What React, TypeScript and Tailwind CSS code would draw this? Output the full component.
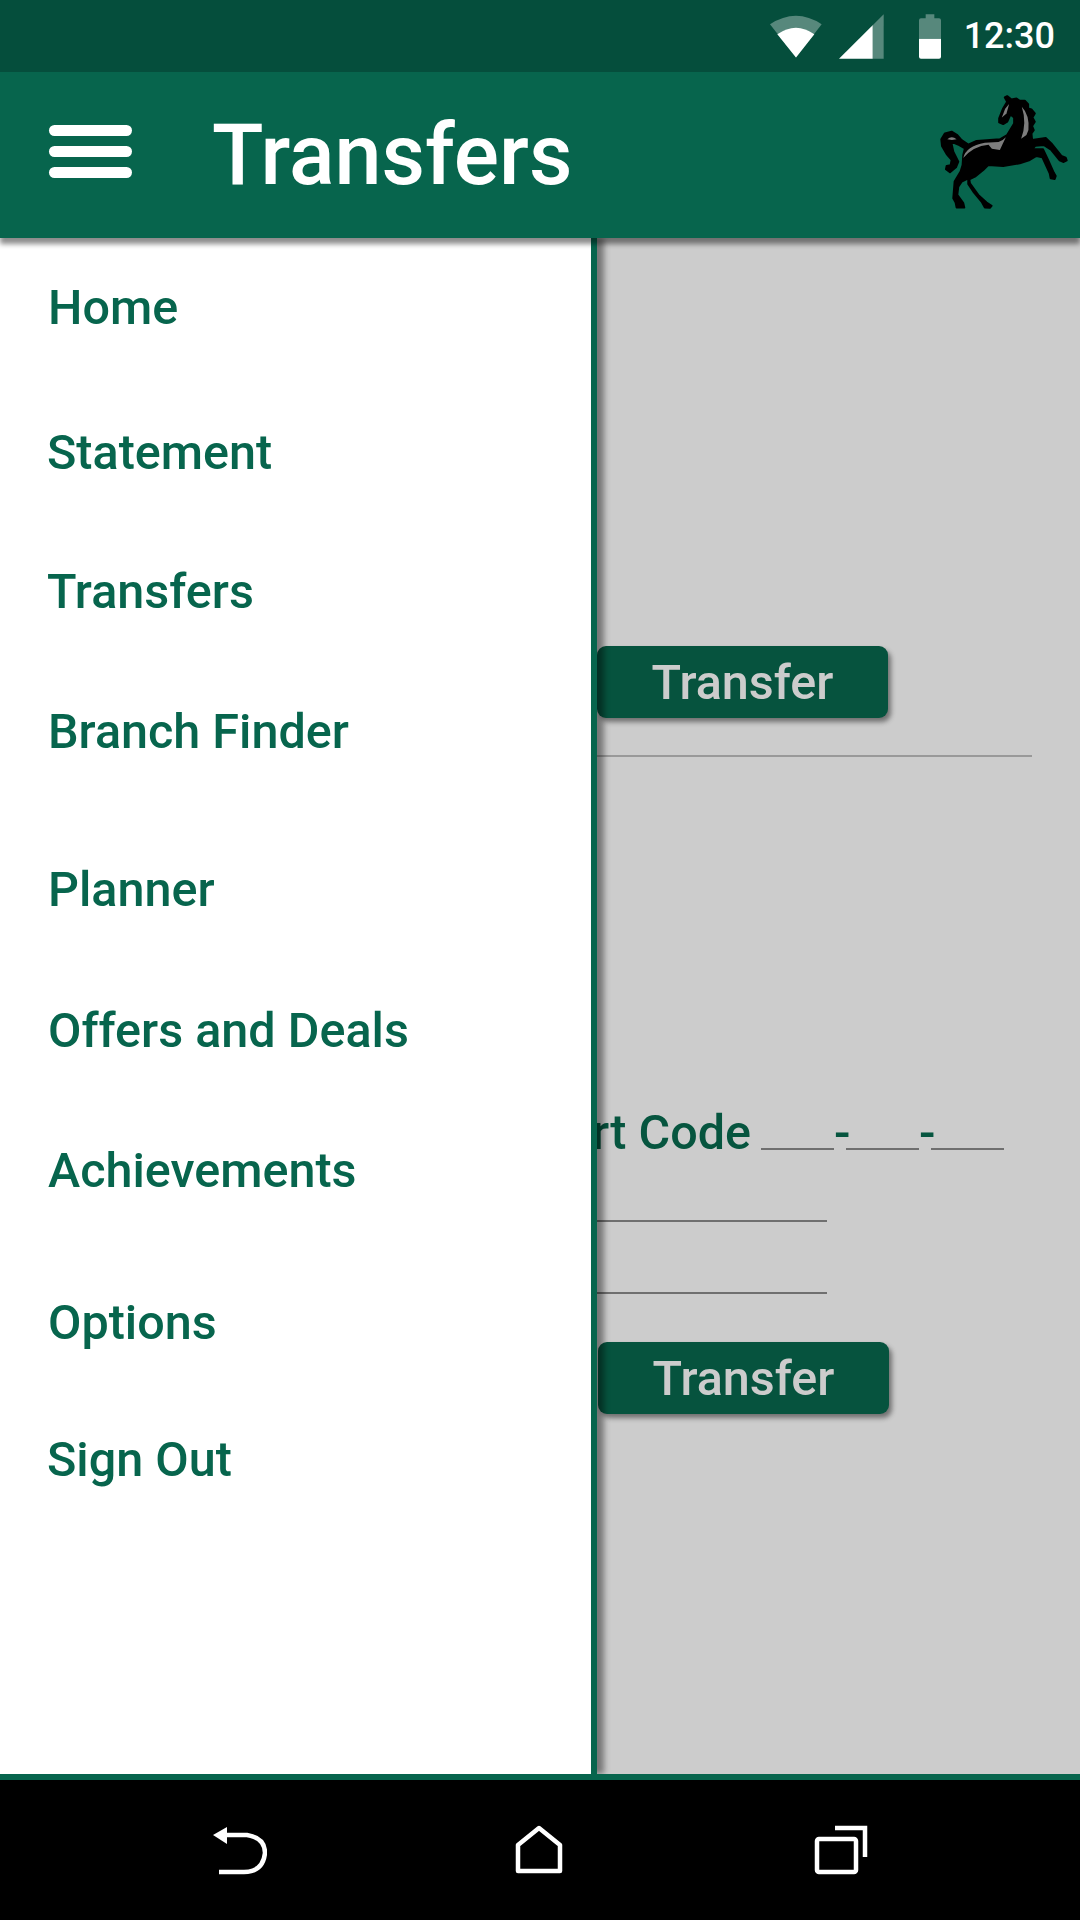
const menuItems = [
  { label: 'Home', className: 'h-[141px] pl-[48px]' },
  { label: 'Statement', className: 'h-[148px] pl-[47px]' },
  { label: 'Transfers', className: 'h-[130px] pl-[47px]' },
  { label: 'Branch Finder', className: 'h-[151px] pl-[48px]' },
  { label: 'Planner', className: 'h-[164px] pl-[48px]' },
  { label: 'Offers and Deals', className: 'h-[118px] pl-[48px]' },
  { label: 'Achievements', className: 'h-[162px] pl-[48px]' },
  { label: 'Options', className: 'h-[142px] pl-[48px]' },
  { label: 'Sign Out', className: 'h-[132px] pl-[47px]' },
]

function StatusIcons() {
  return (
    <svg viewBox="150 42 513 134" className="w-[171px] h-[45px]" aria-hidden="true">
      <path d="M150 72 Q228 21 305 72 L228 172 Z" fill="#fff" fillOpacity="0.33" />
      <path d="M172 102 Q228 63 283 102 L228 172 Z" fill="#fff" />
      <path d="M491 42 V176 H458 V75 Z" fill="#fff" fillOpacity="0.33" />
      <path d="M357 176 L458 75 V176 Z" fill="#fff" />
      <path d="M617 42 H643 V54 H657 Q663 54 663 60 V115 H597 V60 Q597 54 603 54 H617 Z" fill="#fff" fillOpacity="0.33" />
      <path d="M597 116 H663 V170 Q663 176 657 176 H603 Q597 176 597 170 Z" fill="#fff" />
    </svg>
  )
}

function HorseLogo() {
  return (
    <svg viewBox="60 45 385 342" className="w-[128px] h-[114px]" aria-hidden="true">
      <path
        fill="#000"
        stroke="#000"
        strokeWidth="6"
        strokeLinejoin="round"
        d="M262 48 L275 58 L290 55 L300 62 L315 62 L325 72 L325 85 L335 88 L345 100 L338 112 L345 125 L337 138 L342 150 L335 160 L337 180 L378 174 L395 190 L425 228 L438 233 L441 241 L432 246 L420 241 L395 210 L372 195 L347 197 L338 207 L370 208 L385 240 L402 278 L408 288 L405 297 L393 295 L390 280 L368 232 L350 228 L330 240 L300 250 L250 258 L205 255 L190 270 L165 290 L148 298 L150 310 L175 345 L200 368 L215 378 L210 384 L195 383 L185 365 L160 335 L145 312 L145 295 L125 305 L115 320 L112 345 L130 370 L133 383 L110 383 L107 368 L100 355 L104 305 L122 275 L128 255 L130 225 L135 205 L118 195 L100 188 L95 192 L100 215 L115 245 L108 262 L90 277 L78 268 L80 258 L92 256 L95 240 L80 222 L66 198 L64 178 L75 160 L95 155 L112 165 L125 180 L145 194 L170 183 L210 180 L240 178 L262 165 L283 130 L283 112 L272 103 L262 125 L250 132 L238 127 L238 115 L250 85 L262 65 L255 52 Z"
      />
      <path fill="#7d7d7d" d="M306 80 Q330 105 326 150 L320 165 L304 176 Q322 130 306 80 Z" />
      <path fill="#7d7d7d" d="M130 234 Q138 198 195 188 L236 186 Q252 180 258 172 L240 210 L216 206 L206 194 Q160 198 130 234 Z" />
      <path fill="#7d7d7d" d="M246 112 L256 86 L268 72 L260 100 Z" />
      <path fill="#7d7d7d" d="M82 178 Q95 165 110 178 L96 180 Z" />
    </svg>
  )
}

function BackIcon() {
  return (
    <svg width="56" height="52" viewBox="0 0 56 52" fill="none" className="blur-[0.6px]" aria-hidden="true">
      <path d="M2 11 L16 3 V20 Z" fill="#fff" />
      <path d="M14 11 H36 Q54 14 54 29 Q52 48 33 48 H8" stroke="#fff" strokeWidth="4.5" />
    </svg>
  )
}

function HomeIcon() {
  return (
    <svg width="48" height="50" viewBox="0 0 48 50" fill="none" className="blur-[0.6px]" aria-hidden="true">
      <path d="M24 3 L45 20 V46 H3 V20 Z" stroke="#fff" strokeWidth="4.5" strokeLinejoin="round" />
    </svg>
  )
}

function RecentsIcon() {
  return (
    <svg width="54" height="50" viewBox="0 0 54 50" fill="none" className="blur-[0.6px]" aria-hidden="true">
      <rect x="3" y="14" width="39" height="33" rx="2" stroke="#fff" strokeWidth="4.5" />
      <path d="M21 3 H51 V32" stroke="#fff" strokeWidth="4.5" />
    </svg>
  )
}

function TransferButton({ className }: { className: string }) {
  return (
    <button className={`w-[291px] h-[72px] pt-[2px] rounded-[9px] bg-[#06533E] text-[#cccccc] text-[48.5px] leading-none font-medium flex items-center justify-center shadow-[3px_4px_5px_rgba(0,0,0,0.45)] ${className}`}>
      Transfer
    </button>
  )
}

export default function App() {
  return (
    <div className="w-[1080px] h-[1920px] flex flex-col overflow-hidden font-['Roboto',sans-serif]">
      {/* status bar */}
      <div className="h-[72px] bg-[#054E3C] flex items-center justify-end pr-[25px] shrink-0">
        <StatusIcons />
        <span className="ml-[23px] text-white text-[36px] font-medium leading-none">12:30</span>
      </div>

      {/* toolbar */}
      <div className="relative z-20 h-[166px] bg-[#07654D] flex items-center shrink-0 shadow-[0_6px_5px_rgba(0,0,0,0.45)]">
        <div className="ml-[49px] -mt-[7px] w-[83px] flex flex-col gap-[10px]">
          <div className="h-[11px] rounded-full bg-white" />
          <div className="h-[11px] rounded-full bg-white" />
          <div className="h-[11px] rounded-full bg-white" />
        </div>
        <h1 className="ml-[80px] mt-[2px] text-white text-[84.5px] font-medium leading-none">Transfers</h1>
        <div className="ml-auto mr-[12px] -mt-[6px]">
          <HorseLogo />
        </div>
      </div>

      {/* page + drawer */}
      <div className="relative flex-1 bg-[#cccccc] overflow-hidden">
        <div className="pl-[597px] flex flex-col">
          <TransferButton className="mt-[408px]" />
          <div className="mt-[37px] h-[2px] w-[435px] bg-[#999999]" />
          <div className="mt-[343px] h-[50px] flex items-end -ml-[100px] text-[48.5px] font-medium leading-none text-[#06553F]">
            <span className="w-[254px] -mb-[7px] text-right">Sort Code</span>
            <div className="ml-[10px] w-[73px] h-[2px] bg-[#6f6f6f]" />
            <span className="w-[12px] -mb-[7px] text-center">-</span>
            <div className="w-[73px] h-[2px] bg-[#6f6f6f]" />
            <span className="w-[12px] -mb-[7px] text-center">-</span>
            <div className="w-[73px] h-[2px] bg-[#6f6f6f]" />
          </div>
          <div className="mt-[70px] h-[2px] w-[230px] bg-[#6f6f6f]" />
          <div className="mt-[70px] h-[2px] w-[230px] bg-[#6f6f6f]" />
          <TransferButton className="mt-[48px] ml-[1px]" />
        </div>

        <nav className="absolute left-0 top-0 bottom-0 w-[597px] bg-white border-r-[6px] border-[#07654D] shadow-[7px_0_6px_rgba(0,0,0,0.42)]">
          {menuItems.map((item) => (
            <div key={item.label} className={`flex items-center text-[48.5px] font-medium text-[#07654D] ${item.className}`}>
              {item.label}
            </div>
          ))}
        </nav>
      </div>

      {/* nav bar */}
      <div className="relative z-20 h-[146px] shrink-0 bg-black border-t-[6px] border-[#07654D] flex items-center">
        <div className="ml-[211px] -mt-[1px]"><BackIcon /></div>
        <div className="ml-[248px] -mt-[1px]"><HomeIcon /></div>
        <div className="ml-[251px] -mt-[1px]"><RecentsIcon /></div>
      </div>
    </div>
  )
}
